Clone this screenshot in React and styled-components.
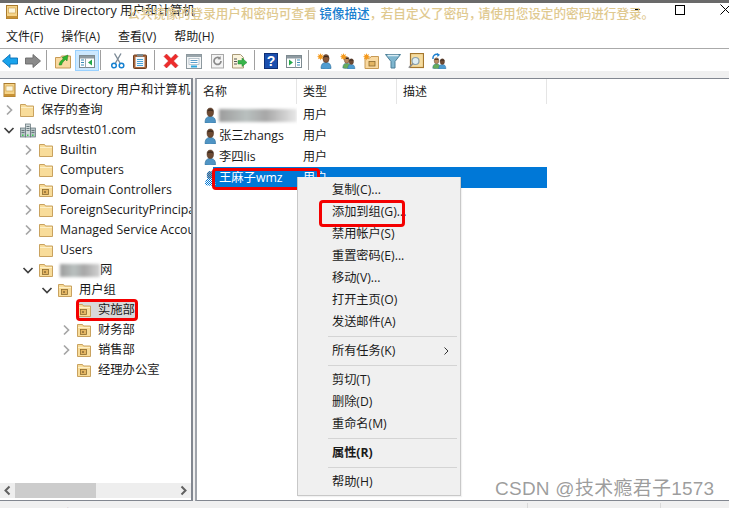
import React from "react";
import styled, { createGlobalStyle } from "styled-components";

const Global = createGlobalStyle`
  html, body { margin: 0; padding: 0; background: #fff; }
  * { box-sizing: border-box; }
`;
const FONT = `"Open Sans", "Noto Sans CJK SC", sans-serif`;

const Page = styled.div`
  position: relative; width: 729px; height: 508px; overflow: hidden; display: flex; flex-direction: column;
  background: #fff; font: 12px/1 ${FONT}; color: #1a1a1a;
`;
const TopStrip = styled.div`height: 3px; flex: none; background: #6a6a6a;`;
const TitleBar = styled.div`
  position: relative; height: 19px; flex: none; display: flex; align-items: center; padding: 0 0 3px 6px; background: #fff;
`;
const TitleIcon = styled.svg`width: 12px; height: 14px; margin-right: 7px; margin-top: 1px; flex: none;`;
const TitleText = styled.span`font-size: 12.5px; white-space: nowrap; color: #222;`;
const Notice = styled.div`
  position: absolute; left: 127.6px; top: 0; font: 500 12.6px/19px "Noto Sans CJK SC", sans-serif; color: #dfc98f; white-space: nowrap;
`;
const NoticeLink = styled.span`color: #1a80cf;`;
const NarrowComma = styled.span`margin-right: ${p => p.$pull}px;`;
const Controls = styled.div`margin-left: auto; margin-top: -3px; display: flex; align-items: center; gap: 35px; margin-right: -2px;`;
const MinButton = styled.span`width: 5px; height: 1px; background: #000;`;
const MaxButton = styled.span`width: 10px; height: 10px; border: 1px solid #000;`;
const CloseButton = styled.svg`width: 11px; height: 11px;`;

const MenuBar = styled.div`height: 26px; flex: none; display: flex; align-items: center; padding: 4px 0 0 6px; gap: 18px; font-size: 12px;`;
const MenuEntry = styled.span`white-space: nowrap;`;

const Toolbar = styled.div`
  height: 23px; flex: none; border-top: 1px solid #aaa; display: flex; align-items: center; padding-left: 1px; background: #fff;
`;
const ToolSlot = styled.div`
  width: ${p => p.$w || 18}px; margin-left: ${p => p.$ml || 0}px; height: 16px; margin-top: 2px; flex: none; display: flex; align-items: center; justify-content: center;
  ${p => p.$active && `height: 21px; margin-top: 1px; background: #cce8ff; border: 1px solid #99d1ff;`}
`;
const ToolSep = styled.span`width: 1px; height: 20px; background: #a0a0a0; flex: none; margin-left: ${p => p.$ml || 0}px;`;
const GapBand = styled.div`height: 7px; flex: none; background: #f0f0f0;`;

const Panes = styled.div`height: 423px; flex: none; display: flex; gap: 2px; background: #f0f0f0;`;
const TreePane = styled.div`
  width: 193px; flex: none; display: flex; flex-direction: column; background: #fff;
  border-top: 1px solid #828790; border-right: 2px solid #828790; border-bottom: 1px solid #828790;
`;
const Tree = styled.div`flex: 1; overflow: hidden; display: flex; flex-direction: column; padding-top: 1px;`;
const TreeRow = styled.div`
  height: 20px; flex: none; display: flex; align-items: center; white-space: nowrap; overflow: hidden;
  padding-left: ${p => (p.$depth === 0 ? 3 : 3 + 19 * (p.$depth - 1))}px;
  font-size: 12.3px;
`;
const Chevron = styled.svg`width: 12px; height: 12px; flex: none; margin-right: 5px;`;
const Tag = styled.span`display: inline-flex; align-items: center; gap: ${p => p.$gap || 7}px; height: 17px; ${p => p.$sel && `background: #d9d9d9;`}`;
const RowLabel = styled.span`display: inline-flex; align-items: center;`;
const Smudge = styled.span`
  display: inline-block; width: ${p => p.$w}px; height: 13px; flex: none; filter: blur(1.5px);
  background: linear-gradient(90deg, #9c9c9c, #b9c0bf 35%, #a7a7a7 60%, ${p => p.$end || "#d2d2d2"});
`;
const ScrollBar = styled.div`height: 15px; flex: none; margin-bottom: 2px; background: #eee; display: flex; align-items: center; position: relative;`;
const ScrollArrow = styled.svg`width: 15px; height: 15px; flex: none;`;
const Thumb = styled.div`width: 81px; height: 15px; background: #ccc; flex: none;`;
const ScrollFill = styled.div`flex: 1;`;

const ListPane = styled.div`
  flex: 1; background: #fff; display: flex; flex-direction: column;
  border-top: 1px solid #828790; border-left: 2px solid #a0a4ab; border-bottom: 1px solid #828790; overflow: hidden;
`;
const Header = styled.div`height: 25px; flex: none; width: 350px; display: grid; grid-template-columns: 100px 100px 150px; align-items: stretch;`;
const HeadCell = styled.div`
  display: flex; align-items: center; padding-left: ${p => p.$pl}px; height: 25px; font-size: 12px; border-right: 1px solid #e5e5e5; color: #222;
`;
const ListRow = styled.div`
  height: 21px; flex: none; width: 350px; display: grid; grid-template-columns: 100px 1fr; align-items: center; position: relative;
  font-size: 12.3px;
`;
const NameCell = styled.div`display: flex; align-items: center; gap: 2px; padding: 1px 0 0 7px; white-space: nowrap; height: 21px; overflow: hidden;`;
const TypeCell = styled.div`padding-left: 6px; font-size: 12px; ${p => p.$sel && `color: #fff;`}`;
const SelectedRow = styled(ListRow)`
  background: linear-gradient(90deg, transparent 16px, #0078d7 16px); color: #fff;
`;

const Status = styled.div`height: 7px; flex: none; background: #f0f0f0; display: flex; font-size: 12px; overflow: hidden;`;
const StatusCell = styled.div`
  width: ${p => p.$w}px; flex: none; padding: 6px 0 0 2px; margin-top: 2px; white-space: nowrap; ${p => p.$div && `border-right: 1px solid #d9d9d9;`}
`;

const Popup = styled.div`
  position: absolute; left: 297px; top: 177px; width: 164px; height: 319px; background: #f0f0f0; border: 1px solid #c8c8c8;
  border-top-width: 0; padding-top: 1px; display: flex; flex-direction: column; font-size: 12.2px; box-shadow: 1px 1px 1px rgba(0,0,0,.05);
`;
const PopItem = styled.div`
  height: 22px; flex: none; display: flex; align-items: center; justify-content: space-between; padding: 2px 11px 0 34px; color: #1a1a1a;
  white-space: nowrap; ${p => p.$bold && `font-weight: 700;`}
`;
const PopSep = styled.div`height: 7px; flex: none; display: flex; align-items: center; padding: 2px 3px 0 30px;
  &::before { content: ""; flex: 1; height: 1px; background: #d4d4d4; }
`;
const Marker = styled.div`
  position: absolute; left: ${p => p.$x}px; top: ${p => p.$y}px; width: ${p => p.$w}px; height: ${p => p.$h}px;
  border: 3px solid #f40000; border-radius: 4px; pointer-events: none;
`;
const Watermark = styled.div`
  position: absolute; left: 495px; top: 478px; font: 19px/22px "Liberation Sans", "Noto Sans CJK SC", sans-serif; letter-spacing: .25px; color: rgba(120,120,120,.72); white-space: nowrap;
`;

/* ---------- icons ---------- */
const Ico = ({ w = 16, h = 16, vb = "0 0 16 16", children }) => (
  <svg width={w} height={h} viewBox={vb} style={{ flex: "none", display: "block" }}>{children}</svg>
);
const Star = () => <path d="M3.5 0l.7 2 1.9-.9-.9 1.900 2 .7-2 .7.9 1.900-1.900-.9-.7 2-.7-2-1.900.9.9-1.900-2-.7 2-.7L.9 1.100l1.900.9z" fill="#f59a1c" />;
const Person = ({ x = 0, y = 0, s = 1, body = "#5da3cf", head = "#8a5a3a" }) => (
  <g transform={`translate(${x} ${y}) scale(${s})`}>
    <path d="M1 15c0-4 1.500-6 5-6s5 2 5 6q-5 1.500-10 0z" fill={body} stroke="#2f6f9c" strokeWidth=".6" />
    <ellipse cx="6" cy="5" rx="3.100" ry="4" fill={head} stroke="#4c2f1e" strokeWidth=".5" />
    <path d="M3 4.200c.6-2.600 5.400-2.600 6 0-2-.8-4-.8-6 0z" fill="#3b2a20" />
  </g>
);
const Folder = ({ ou }) => (
  <Ico w={14} h={14} vb="0 0 14 14">
    <path d="M.5 3V1.500h5l1 1.500h7v10.500H.5z" fill="#f8dc9a" stroke="#c9a25f" />
    <path d="M1 4.500h12" stroke="#fdf0c8" />
    {ou && <rect x="3.500" y="6.500" width="6" height="5" fill="#e3b562" stroke="#8c6a2e" strokeWidth=".8" />}
    {ou && <path d="M5 9h2" stroke="#5c4420" />}
  </Ico>
);
const Domain = () => (
  <Ico w={16} h={16}>
    <rect x="0.500" y="6" width="5" height="9" fill="#b6c3c6" stroke="#5f7075" strokeWidth=".7" />
    <rect x="5.500" y="2" width="5" height="13" fill="#cfd8da" stroke="#5f7075" strokeWidth=".7" />
    <rect x="10.500" y="6" width="5" height="9" fill="#b6c3c6" stroke="#5f7075" strokeWidth=".7" />
    <path d="M1.500 8.500h3M1.500 10.500h3M6.500 4.500h3M6.500 6.500h3M6.500 8.500h3M11.500 8.500h3M11.500 10.500h3" stroke="#54666b" strokeWidth=".8" />
    <rect x="2" y="12.500" width="1.500" height="1.500" fill="#3ccf4e" />
    <rect x="7" y="12.500" width="1.500" height="1.500" fill="#3ccf4e" />
    <rect x="12" y="12.500" width="1.500" height="1.500" fill="#3ccf4e" />
  </Ico>
);
const RootIcon = () => (
  <TitleIcon viewBox="0 0 12 14">
    <rect x=".5" y=".5" width="11" height="13" fill="#f6d488" stroke="#a97a2c" />
    <rect x="2.500" y="3" width="7" height="5" fill="#fdf6dc" stroke="#c69a4a" strokeWidth=".6" />
    <rect x=".5" y="11" width="11" height="2.500" fill="#c89236" />
  </TitleIcon>
);
const RootTreeIcon = () => (
  <Ico w={13} h={14} vb="0 0 12 14">
    <rect x=".5" y=".5" width="11" height="13" fill="#f6d488" stroke="#a97a2c" />
    <rect x="2.500" y="3" width="7" height="5" fill="#fdf6dc" stroke="#c69a4a" strokeWidth=".6" />
    <rect x=".5" y="11" width="11" height="2.500" fill="#c89236" />
  </Ico>
);
const ChevronRight = () => <Chevron viewBox="0 0 12 12"><path d="M4 1.500L8.500 6 4 10.500" fill="none" stroke="#a6a6a6" strokeWidth="1.700" /></Chevron>;
const ChevronDown = () => <Chevron viewBox="0 0 12 12"><path d="M1.500 4L6 8.500 10.500 4" fill="none" stroke="#404040" strokeWidth="1.700" /></Chevron>;
const ChevronNone = () => <Chevron viewBox="0 0 12 12" />;

const UserIcon = () => <Ico w={13} h={16} vb="0 0 13 16"><Person x={0} y={0} s={1.05} body="#4f94c4" head="#6d4a33" /></Ico>;
const UserIconSel = () => (
  <Ico w={13} h={16} vb="0 0 13 16">
    <defs>
      <pattern id="dith" width="2" height="2" patternUnits="userSpaceOnUse">
        <rect width="2" height="2" fill="#fff" /><rect width="1" height="1" fill="#0078d7" /><rect x="1" y="1" width="1" height="1" fill="#0078d7" />
      </pattern>
    </defs>
    <path d="M1 15c0-4 1-6 2.500-6.500C2 6 2.500 1 6 1s4 5 2.500 7.500C10 9 11.500 11 11.500 15q-5 1.500-10.500 0z" fill="url(#dith)" />
    <ellipse cx="6" cy="5" rx="3" ry="3.800" fill="#3a5f80" opacity=".6" />
  </Ico>
);

const Window = ({ children }) => (
  <>
    <rect x=".5" y="2.500" width="15" height="12" fill="#fff" stroke="#7d8a90" />
    <rect x="1" y="3" width="14" height="2.500" fill="#8e9aa1" />
    {children}
  </>
);
const tools = {
  back: <path d="M.5 8L8 1.500V5h7.500v6H8v3.500z" fill="#19a3ec" stroke="#0b6fb5" strokeWidth=".9" />,
  forward: <path d="M15.500 8L8 1.500V5H.5v6H8v3.500z" fill="#8a8a8a" stroke="#6a6a6a" strokeWidth=".9" />,
  up: <>
    <path d="M.5 4.500h5l1-1.500h9v12H.5z" fill="#f9d9a0" stroke="#c79a55" />
    <path d="M4 12c.5-3 2-5 4.500-6L7 4.500 13 2l-1 6-1.500-1.500C8.500 8 7 10 6.500 12z" fill="#2fb52f" stroke="#1c7d1c" strokeWidth=".5" />
  </>,
  tree: <Window>
    <path d="M2 7h3M2 9.500h3M2 12h3" stroke="#3b8bb8" strokeWidth="1.200" />
    <path d="M6.500 5.500v9" stroke="#9aa5ab" />
    <path d="M13 6.500v6L9 9.500z" fill="#25a84a" />
  </Window>,
  cut: <>
    <path d="M5.500 10L11 .5M10 10L4.500.5" stroke="#7d8b97" strokeWidth="1.400" />
    <circle cx="4" cy="12.500" r="2.300" fill="none" stroke="#1580d0" strokeWidth="1.500" />
    <circle cx="11.500" cy="12.500" r="2.300" fill="none" stroke="#1580d0" strokeWidth="1.500" />
  </>,
  paste: <>
    <rect x="1.500" y="2" width="13" height="13.500" rx="1" fill="#a8653a" stroke="#6f3f20" />
    <rect x="3.500" y="4" width="9" height="10" fill="#f3f8fb" />
    <path d="M5 6.500h6M5 8.500h6M5 10.500h6M5 12.500h6" stroke="#4aa3d8" />
    <rect x="5" y="1" width="6" height="2.500" fill="#7d8a90" />
  </>,
  del: <path d="M1 3.500L3.500 1 8 5.500 12.500 1 15 3.500 10.500 8 15 12.500 12.500 15 8 10.500 3.500 15 1 12.500 5.500 8z" fill="#ee2b2b" stroke="#c61d1d" strokeWidth=".5" />,
  props: <>
    <rect x=".5" y="1.500" width="15" height="14" fill="#f4f6f7" stroke="#8d989e" />
    <rect x="1" y="2" width="14" height="2" fill="#9aa6ac" />
    <rect x="3" y="5.500" width="10" height="6" fill="#fff" stroke="#9fb0bb" strokeWidth=".7" />
    <path d="M4.500 7.500h7M4.500 9.500h7" stroke="#5d9fca" />
    <path d="M5 13.500h6" stroke="#29a7df" strokeWidth="2" />
  </>,
  refresh: <>
    <rect x="1.500" y="1.500" width="12" height="13.500" fill="#f4f4f4" stroke="#a9a9a9" />
    <path d="M11 8a3.500 3.500 0 1 1-1.200-2.700" fill="none" stroke="#8a8a8a" strokeWidth="1.700" />
    <path d="M10.500 3l.3 3.500-3.300-.2z" fill="#8a8a8a" />
  </>,
  exportList: <>
    <path d="M1.500 1.500h8l3 3v10.500h-11z" fill="#faf3dc" stroke="#a89a78" />
    <path d="M3 6h3M3 8.500h3M3 11h3" stroke="#555" />
    <path d="M7 7.500h4V5l5 4.500L11 13.500V11H7z" fill="#38b54a" stroke="#1f8a33" strokeWidth=".5" />
  </>,
  help: <>
    <rect x="1.500" y=".5" width="13" height="15" fill="#1a4fae" stroke="#0e2f75" />
    <text x="8" y="13" fontFamily="Liberation Sans, sans-serif" fontWeight="700" fontSize="14" textAnchor="middle" fill="#fff">?</text>
  </>,
  view: <Window>
    <path d="M11 7h3M11 9.500h3M11 12h3" stroke="#3b8bb8" strokeWidth="1.200" />
    <path d="M9.500 5.500v9" stroke="#9aa5ab" />
    <path d="M3 6.500v6L7 9.500z" fill="#25a84a" />
  </Window>,
  newUser: <><Person x={3} y={0.500} body="#4f9cd0" head="#8a5a3a" /><Star /></>,
  newGroup: <>
    <Person x={2} y={3} s={.8} body="#66ad5a" head="#b98a5e" />
    <Person x={7} y={5} s={.72} body="#4f9cd0" head="#6d4a33" />
    <Star />
  </>,
  newOU: <>
    <path d="M2 5h5l1-1.500h7.500V15.500H2z" fill="#f9d9a0" stroke="#c79a55" />
    <rect x="6" y="8.500" width="6" height="4.500" fill="#e3b562" stroke="#8c6a2e" strokeWidth=".8" />
    <Star />
  </>,
  filter: <>
    <path d="M.5 1.500h15L10 8.500v6.500l-4 0V8.500z" fill="#7fb6cf" stroke="#4d7f97" />
    <path d="M2.500 2.500h11" stroke="#d8ecf4" strokeWidth="1.500" />
  </>,
  find: <>
    <rect x="2.500" y=".5" width="13" height="14" fill="#f6dc9f" stroke="#a5772e" strokeWidth="1.200" />
    <circle cx="7.500" cy="8" r="3.500" fill="#dfeef4" stroke="#8ba0aa" strokeWidth="1.200" />
    <path d="M5 10.500L.8 14.800" stroke="#8b8b8b" strokeWidth="1.600" />
  </>,
  move: <>
    <path d="M2 6c-.5-3 2-5.500 5-4.500" fill="none" stroke="#1c7fcf" strokeWidth="1.400" />
    <path d="M6 0l3 1.800L6.500 4z" fill="#1c7fcf" />
    <Person x={1} y={4} s={.75} body="#66ad5a" head="#b98a5e" />
    <Person x={7} y={5} s={.72} body="#4f9cd0" head="#6d4a33" />
  </>,
};
const Tool = ({ k, w, ml, active, iw = 16 }) => (
  <ToolSlot $w={w} $ml={ml} $active={active}><Ico w={iw} h={16}>{tools[k]}</Ico></ToolSlot>
);

const Row = ({ depth, arrow, ou, children }) => (
  <TreeRow $depth={depth}>
    {arrow === "r" ? <ChevronRight /> : arrow === "d" ? <ChevronDown /> : <ChevronNone />}
    <Tag><Folder ou={ou} /><RowLabel>{children}</RowLabel></Tag>
  </TreeRow>
);

export default function App() {
  return (
    <Page>
      <Global />
      <TopStrip />
      <TitleBar>
        <RootIcon />
        <TitleText>Active Directory 用户和计算机</TitleText>
        <Notice>公共镜像的登录用户和密码可查看<NoticeLink> 镜像描述</NoticeLink><NarrowComma $pull={-1.6}>，</NarrowComma>若自定义了密码<NarrowComma $pull={-3.6}>，</NarrowComma>请使用您设定的密码进行登录。</Notice>
        <Controls>
          <MinButton />
          <MaxButton />
          <CloseButton viewBox="0 0 11 11"><path d="M.5.500l10 10M10.500.500l-10 10" stroke="#000" /></CloseButton>
        </Controls>
      </TitleBar>
      <MenuBar>
        <MenuEntry>文件(F)</MenuEntry>
        <MenuEntry>操作(A)</MenuEntry>
        <MenuEntry>查看(V)</MenuEntry>
        <MenuEntry>帮助(H)</MenuEntry>
      </MenuBar>
      <Toolbar>
        <Tool k="back" />
        <Tool k="forward" ml={5} />
        <ToolSep $ml={4} />
        <Tool k="up" ml={7} />
        <Tool k="tree" w={24} ml={3} active />
        <ToolSep $ml={1} />
        <Tool k="cut" ml={8} />
        <Tool k="paste" ml={4} />
        <ToolSep $ml={5} />
        <Tool k="del" ml={7} />
        <Tool k="props" ml={5} />
        <Tool k="refresh" ml={6} />
        <Tool k="exportList" ml={3} />
        <ToolSep $ml={6} />
        <Tool k="help" ml={7} />
        <Tool k="view" ml={5} />
        <ToolSep $ml={5} />
        <Tool k="newUser" ml={7} />
        <Tool k="newGroup" ml={5} />
        <Tool k="newOU" ml={5} />
        <Tool k="filter" ml={4} />
        <Tool k="find" ml={5} />
        <Tool k="move" ml={5} />
      </Toolbar>
      <GapBand />
      <Panes>
        <TreePane>
          <Tree>
            <TreeRow $depth={0}><Tag><RootTreeIcon /><RowLabel>Active Directory 用户和计算机</RowLabel></Tag></TreeRow>
            <Row depth={1} arrow="r">保存的查询</Row>
            <TreeRow $depth={1}><ChevronDown /><Tag $gap={5}><Domain /><RowLabel>adsrvtest01.com</RowLabel></Tag></TreeRow>
            <Row depth={2} arrow="r">Builtin</Row>
            <Row depth={2} arrow="r">Computers</Row>
            <Row depth={2} arrow="r" ou>Domain Controllers</Row>
            <Row depth={2} arrow="r">ForeignSecurityPrincipals</Row>
            <Row depth={2} arrow="r">Managed Service Accounts</Row>
            <Row depth={2}>Users</Row>
            <Row depth={2} arrow="d" ou><Smudge $w={40} />网</Row>
            <Row depth={3} arrow="d" ou>用户组</Row>
            <TreeRow $depth={4}><ChevronNone /><Tag $sel><Folder ou /><RowLabel>实施部</RowLabel></Tag></TreeRow>
            <Row depth={4} arrow="r" ou>财务部</Row>
            <Row depth={4} arrow="r" ou>销售部</Row>
            <Row depth={4} ou>经理办公室</Row>
          </Tree>
          <ScrollBar>
            <ScrollArrow viewBox="0 0 15 15"><path d="M9.500 3.500L5.500 7.500l4 4" fill="none" stroke="#606060" strokeWidth="2" /></ScrollArrow>
            <Thumb />
            <ScrollFill />
            <ScrollArrow viewBox="0 0 15 15"><path d="M5.500 3.500l4 4-4 4" fill="none" stroke="#606060" strokeWidth="2" /></ScrollArrow>
          </ScrollBar>
        </TreePane>
        <ListPane>
          <Header>
            <HeadCell $pl={6}>名称</HeadCell>
            <HeadCell $pl={6}>类型</HeadCell>
            <HeadCell $pl={6}>描述</HeadCell>
          </Header>
          <ListRow>
            <NameCell><UserIcon /><Smudge $w={78} $end="#e8e8e8" /></NameCell>
            <TypeCell>用户</TypeCell>
          </ListRow>
          <ListRow>
            <NameCell><UserIcon />张三zhangs</NameCell>
            <TypeCell>用户</TypeCell>
          </ListRow>
          <ListRow>
            <NameCell><UserIcon />李四lis</NameCell>
            <TypeCell>用户</TypeCell>
          </ListRow>
          <SelectedRow>
            <NameCell><UserIconSel />王麻子wmz</NameCell>
            <TypeCell $sel>用户</TypeCell>
          </SelectedRow>
        </ListPane>
      </Panes>
      <Status>
        <StatusCell $w={528} $div>操作已成功完成，对象已经添加到组</StatusCell>
        <StatusCell $w={133} $div />
        <StatusCell $w={68} />
      </Status>

      <Marker $x={212} $y={168} $w={108} $h={22} />
      <Popup>
        <PopItem>复制(C)...</PopItem>
        <PopItem>添加到组(G)...</PopItem>
        <PopItem>禁用帐户(S)</PopItem>
        <PopItem>重置密码(E)...</PopItem>
        <PopItem>移动(V)...</PopItem>
        <PopItem>打开主页(O)</PopItem>
        <PopItem>发送邮件(A)</PopItem>
        <PopSep />
        <PopItem>所有任务(K)<svg width="5" height="8" viewBox="0 0 5 8"><path d="M.5.500L4 4 .5 7.500" fill="none" stroke="#333" /></svg></PopItem>
        <PopSep />
        <PopItem>剪切(T)</PopItem>
        <PopItem>删除(D)</PopItem>
        <PopItem>重命名(M)</PopItem>
        <PopSep />
        <PopItem $bold>属性(R)</PopItem>
        <PopSep />
        <PopItem>帮助(H)</PopItem>
      </Popup>
      <Marker $x={319} $y={200} $w={86} $h={27} />
      <Marker $x={76} $y={299} $w={62} $h={22} />
      <Watermark>CSDN @技术瘾君子1573</Watermark>
    </Page>
  );
}
